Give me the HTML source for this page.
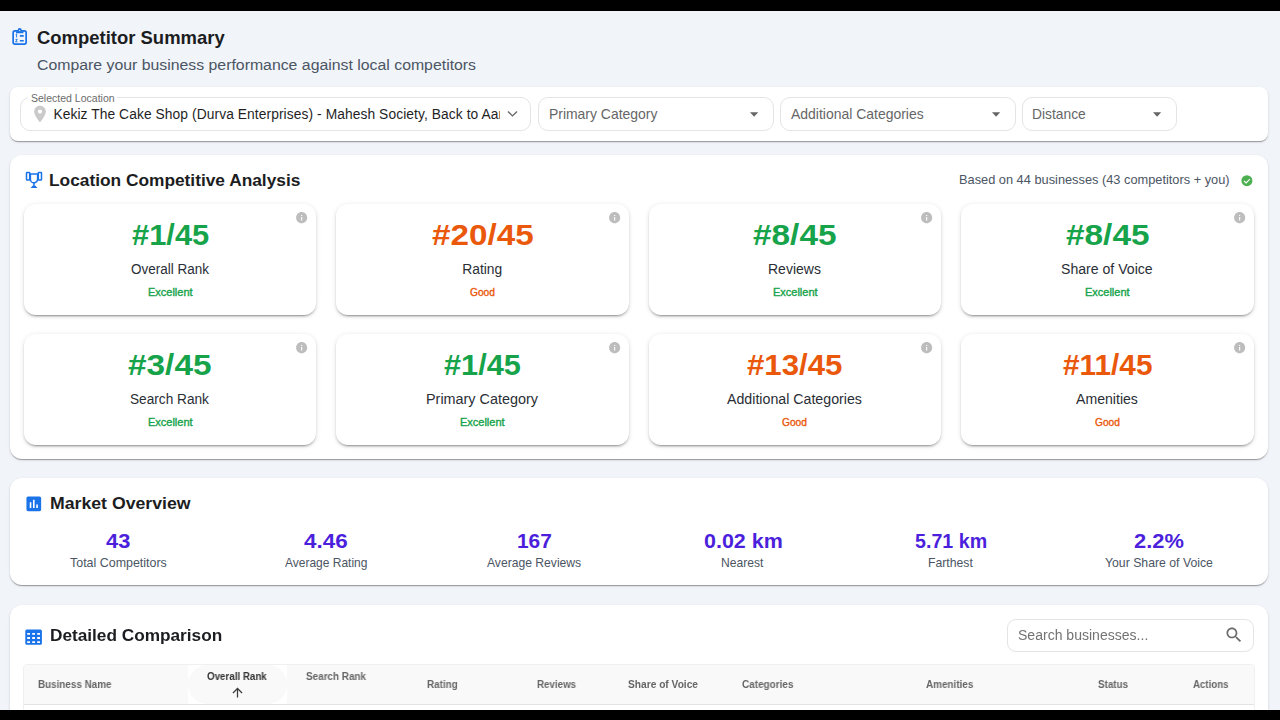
<!DOCTYPE html>
<html><head><meta charset="utf-8">
<style>
*{box-sizing:border-box;margin:0;padding:0}
html,body{width:1280px;height:720px;overflow:hidden;background:#000}
body{font-family:"Liberation Sans",sans-serif;position:relative}
.bg{position:absolute;left:0;top:11px;width:1280px;height:698.5px;background:#f1f4f9}
.a{position:absolute}
.card{position:absolute;background:#fff;border-radius:12px;
 box-shadow:0 2px 1px -1px rgba(0,0,0,.2),0 1px 1px 0 rgba(0,0,0,.14),0 1px 3px 0 rgba(0,0,0,.12)}
.kpi{position:absolute;width:292.5px;height:110.5px;background:#fff;border-radius:12px;
 box-shadow:0 3px 1px -2px rgba(0,0,0,.2),0 2px 2px 0 rgba(0,0,0,.14),0 1px 5px 0 rgba(0,0,0,.12)}
.t{position:absolute;white-space:nowrap;line-height:1}
.field{position:absolute;border:1px solid #e4e4e4;border-radius:10px;background:#fff}
.info{position:absolute;width:11px;height:11px}
.black{position:absolute;left:0;width:1280px;background:#000}
</style></head><body>
<div class="bg"></div>

<!-- header icon: clipboard list -->
<svg class="a" style="left:8px;top:24px" width="24" height="24" viewBox="0 0 24 24">
  <rect x="5.15" y="6.85" width="13" height="13.3" rx="1.8" fill="none" stroke="#1a73e8" stroke-width="1.7"/>
  <path d="M9.6 6.2a2.1 2.1 0 0 1 4.2 0v0.8H9.6z" fill="#1a73e8"/>
  <circle cx="11.7" cy="6.7" r=".65" fill="#fff"/>
  <path d="M7.6 7.2h8.2l-0.6 2h-7z" fill="#1a73e8"/>
  <rect x="11.8" y="11.1" width="4" height="1.6" rx=".5" fill="#1a73e8"/>
  <rect x="11.8" y="16" width="4" height="1.6" rx=".5" fill="#1a73e8"/>
  <path d="M7.7 10.5l.9-.6v3.6" fill="none" stroke="#1a73e8" stroke-width=".9"/>
  <path d="M7.5 15.4h1.8l-1.8 2.4h2" fill="none" stroke="#1a73e8" stroke-width=".9"/>
</svg>

<!-- filter card -->
<div class="card" style="left:10px;top:87px;width:1258px;height:54px;border-radius:8px"></div>
<div class="field" style="left:20px;top:97px;width:511px;height:34px"></div>
<div class="a" style="left:28px;top:96px;width:89px;height:4px;background:#fff"></div>
<svg class="a" style="left:30px;top:104px" width="20" height="20" viewBox="0 0 24 24"><path fill="#cacaca" d="M12 2C8.13 2 5 5.13 5 9c0 5.25 7 13 7 13s7-7.75 7-13c0-3.87-3.13-7-7-7zm0 9.5c-1.38 0-2.5-1.12-2.5-2.5s1.12-2.5 2.5-2.5 2.5 1.12 2.5 2.5-1.12 2.5-2.5 2.5z"/></svg>
<svg class="a" style="left:506px;top:109px" width="13" height="10" viewBox="0 0 13 10"><path d="M2 2.5l4.5 4.4 4.5-4.4" fill="none" stroke="#666" stroke-width="1.35"/></svg>
<div class="field" style="left:538px;top:97px;width:236px;height:34px"></div>
<div class="field" style="left:780px;top:97px;width:236px;height:34px"></div>
<div class="field" style="left:1022px;top:97px;width:155px;height:34px"></div>
<svg class="a" style="left:749.8px;top:111.8px" width="9" height="6" viewBox="0 0 9 6"><path d="M0 0.2h8.2l-4.1 4.5z" fill="#666"/></svg>
<svg class="a" style="left:991.8px;top:111.8px" width="9" height="6" viewBox="0 0 9 6"><path d="M0 0.2h8.2l-4.1 4.5z" fill="#666"/></svg>
<svg class="a" style="left:1152.8px;top:111.8px" width="9" height="6" viewBox="0 0 9 6"><path d="M0 0.2h8.2l-4.1 4.5z" fill="#666"/></svg>

<!-- analysis card -->
<div class="card" style="left:10px;top:154.5px;width:1258px;height:304px"></div>
<svg class="a" style="left:24px;top:170px" width="20" height="20" viewBox="0 0 20 20">
  <g fill="none" stroke="#1a73e8" stroke-width="1.5">
    <rect x="2.5" y="2.4" width="3.2" height="7.6" rx=".6"/>
    <rect x="14.3" y="2.4" width="3.2" height="7.6" rx=".6"/>
    <path d="M6.4 3.9h7.2v5.3a3.6 3.6 0 0 1-7.2 0z"/>
    <path d="M10 13v2.5"/>
  </g>
  <path d="M6.5 18h7l-2.6-2.8h-1.8z" fill="#1a73e8"/>
</svg>
<svg class="a" style="left:1241px;top:175px" width="12" height="12" viewBox="0 0 12 12"><circle cx="5.9" cy="5.7" r="5.5" fill="#4caf50"/><path d="M3 6l2.1 1.9 3.8-3.7" fill="none" stroke="#fff" stroke-width="1.15"/></svg>

<div class="kpi" style="left:23.5px;top:204px"></div>
<div class="kpi" style="left:336px;top:204px"></div>
<div class="kpi" style="left:648.5px;top:204px"></div>
<div class="kpi" style="left:961px;top:204px"></div>
<div class="kpi" style="left:23.5px;top:334px"></div>
<div class="kpi" style="left:336px;top:334px"></div>
<div class="kpi" style="left:648.5px;top:334px"></div>
<div class="kpi" style="left:961px;top:334px"></div>
<svg class="info" style="left:295.10px;top:211.40px;width:13.3px;height:13.3px" viewBox="0 0 24 24"><path fill="#bdbdbd" d="M12 2C6.48 2 2 6.48 2 12s4.48 10 10 10 10-4.48 10-10S17.52 2 12 2zm1 15h-2v-6h2v6zm0-8h-2V7h2v2z"/></svg>
<svg class="info" style="left:607.60px;top:211.40px;width:13.3px;height:13.3px" viewBox="0 0 24 24"><path fill="#bdbdbd" d="M12 2C6.48 2 2 6.48 2 12s4.48 10 10 10 10-4.48 10-10S17.52 2 12 2zm1 15h-2v-6h2v6zm0-8h-2V7h2v2z"/></svg>
<svg class="info" style="left:920.10px;top:211.40px;width:13.3px;height:13.3px" viewBox="0 0 24 24"><path fill="#bdbdbd" d="M12 2C6.48 2 2 6.48 2 12s4.48 10 10 10 10-4.48 10-10S17.52 2 12 2zm1 15h-2v-6h2v6zm0-8h-2V7h2v2z"/></svg>
<svg class="info" style="left:1232.60px;top:211.40px;width:13.3px;height:13.3px" viewBox="0 0 24 24"><path fill="#bdbdbd" d="M12 2C6.48 2 2 6.48 2 12s4.48 10 10 10 10-4.48 10-10S17.52 2 12 2zm1 15h-2v-6h2v6zm0-8h-2V7h2v2z"/></svg>
<svg class="info" style="left:295.10px;top:341.40px;width:13.3px;height:13.3px" viewBox="0 0 24 24"><path fill="#bdbdbd" d="M12 2C6.48 2 2 6.48 2 12s4.48 10 10 10 10-4.48 10-10S17.52 2 12 2zm1 15h-2v-6h2v6zm0-8h-2V7h2v2z"/></svg>
<svg class="info" style="left:607.60px;top:341.40px;width:13.3px;height:13.3px" viewBox="0 0 24 24"><path fill="#bdbdbd" d="M12 2C6.48 2 2 6.48 2 12s4.48 10 10 10 10-4.48 10-10S17.52 2 12 2zm1 15h-2v-6h2v6zm0-8h-2V7h2v2z"/></svg>
<svg class="info" style="left:920.10px;top:341.40px;width:13.3px;height:13.3px" viewBox="0 0 24 24"><path fill="#bdbdbd" d="M12 2C6.48 2 2 6.48 2 12s4.48 10 10 10 10-4.48 10-10S17.52 2 12 2zm1 15h-2v-6h2v6zm0-8h-2V7h2v2z"/></svg>
<svg class="info" style="left:1232.60px;top:341.40px;width:13.3px;height:13.3px" viewBox="0 0 24 24"><path fill="#bdbdbd" d="M12 2C6.48 2 2 6.48 2 12s4.48 10 10 10 10-4.48 10-10S17.52 2 12 2zm1 15h-2v-6h2v6zm0-8h-2V7h2v2z"/></svg>

<!-- market card -->
<div class="card" style="left:10px;top:478px;width:1258px;height:107px"></div>
<svg class="a" style="left:23.9px;top:493.8px" width="19.6" height="19.6" viewBox="0 0 24 24"><path fill="#1a73e8" d="M19 3H5c-1.1 0-2 .9-2 2v14c0 1.1.9 2 2 2h14c1.1 0 2-.9 2-2V5c0-1.1-.9-2-2-2zM9 17H7v-7h2v7zm4 0h-2V7h2v10zm4 0h-2v-4h2v4z"/></svg>

<!-- detailed card -->
<div class="card" style="left:10px;top:605px;width:1258px;height:200px"></div>
<svg class="a" style="left:25px;top:629px" width="18" height="17" viewBox="0 0 18 17">
  <path fill="#1a73e8" fill-rule="evenodd" d="M1.8 0.4h13.6a1.5 1.5 0 0 1 1.5 1.5v12.3a1.5 1.5 0 0 1-1.5 1.5H1.8a1.5 1.5 0 0 1-1.5-1.5V1.9a1.5 1.5 0 0 1 1.5-1.5z
  M2.2 3.9v1.9h2.8V3.9z M7.2 3.9v1.9h2.8V3.9z M12.2 3.9v1.9h2.8V3.9z
  M2.2 8.1v1.9h2.8V8.1z M7.2 8.1v1.9h2.8V8.1z M12.2 8.1v1.9h2.8V8.1z
  M2.2 12.2v1.9h2.8v-1.9z M7.2 12.2v1.9h2.8v-1.9z M12.2 12.2v1.9h2.8v-1.9z"/>
</svg>
<div class="field" style="left:1007px;top:619px;width:247px;height:33px;border-radius:9px"></div>
<svg class="a" style="left:1224px;top:625px" width="20" height="20" viewBox="0 0 24 24"><path fill="#6b6b6b" d="M15.5 14h-.79l-.28-.27C15.41 12.59 16 11.11 16 9.5 16 5.91 13.09 3 9.5 3S3 5.910 3 9.5 5.91 16 9.5 16c1.61 0 3.09-.59 4.23-1.57l.27.28v.79l5 4.99L20.49 19l-4.99-5zm-6 0C7.01 14 5 11.99 5 9.5S7.01 5 9.5 5 14 7.01 14 9.5 11.99 14 9.5 14z"/></svg>
<div class="a" style="left:23px;top:664px;width:1232px;height:80px;border:1px solid #f0f0f0;border-radius:4px"></div>
<div class="a" style="left:24px;top:664.5px;width:1230px;height:40.5px;background:#f9f9f9;border-bottom:1px solid #e3e3e3;border-radius:4px 4px 0 0"></div>
<div class="a" style="left:188px;top:664.5px;width:99px;height:39.5px;background:#fff"></div>
<div class="a" style="left:188px;top:664.5px;width:99px;height:39.5px;background:#f9f9f9;border-radius:20px"></div>
<svg class="a" style="left:229.5px;top:685px" width="15" height="15" viewBox="0 0 24 24"><path fill="#3a3a3a" d="M4 12l1.41 1.41L11 7.83V20h2V7.83l5.58 5.59L20 12l-8-8-8 8z"/></svg>

<div class="t" style="left:37.00px;top:29.03px;font-size:18.1px;font-weight:bold;color:#1c1d21;transform:scaleX(1.0200);transform-origin:0 0">Competitor Summary</div>
<div class="t" style="left:36.80px;top:57.02px;font-size:15.3px;font-weight:normal;color:#4b5563;transform:scaleX(1.0348);transform-origin:0 0">Compare your business performance against local competitors</div>
<div class="t" style="left:30.80px;top:94.02px;font-size:10px;font-weight:normal;color:#6b6b6b;transform:scaleX(1.0514);transform-origin:0 0">Selected Location</div>
<div class="t" style="left:53.40px;top:108.02px;font-size:13.8px;font-weight:normal;color:#1f1f1f;letter-spacing:0.080px;width:447.00px;overflow:hidden">Kekiz The Cake Shop (Durva Enterprises) - Mahesh Society, Back to Aarey</div>
<div class="t" style="left:548.51px;top:107.03px;font-size:14.1px;font-weight:normal;color:#666;transform:scaleX(0.9881);transform-origin:0 0">Primary Category</div>
<div class="t" style="left:791.20px;top:107.03px;font-size:14.1px;font-weight:normal;color:#666;transform:scaleX(0.9901);transform-origin:0 0">Additional Categories</div>
<div class="t" style="left:1032.22px;top:107.03px;font-size:14.1px;font-weight:normal;color:#666;transform:scaleX(0.9797);transform-origin:0 0">Distance</div>
<div class="t" style="left:49.42px;top:173.03px;font-size:16px;font-weight:bold;color:#1c1d21;transform:scaleX(1.0817);transform-origin:0 0">Location Competitive Analysis</div>
<div class="t" style="left:959.45px;top:174.03px;font-size:12.2px;font-weight:normal;color:#4b5563;transform:scaleX(1.0498);transform-origin:0 0">Based on 44 businesses (43 competitors + you)</div>
<div class="t" style="left:131.53px;top:220.03px;font-size:29.6px;font-weight:bold;color:#16a34a;transform:scaleX(1.0428);transform-origin:0 0">#1/45</div>
<div class="t" style="left:130.90px;top:263.02px;font-size:13.8px;font-weight:normal;color:#2a2e35;transform:scaleX(0.9769);transform-origin:0 0">Overall Rank</div>
<div class="t" style="left:147.53px;top:288.02px;font-size:10.2px;font-weight:normal;color:#16a34a;transform:scaleX(1.0781);transform-origin:0 0;-webkit-text-stroke:0.35px #16a34a">Excellent</div>
<div class="t" style="left:431.77px;top:220.03px;font-size:29.6px;font-weight:bold;color:#ea580c;transform:scaleX(1.1243);transform-origin:0 0">#20/45</div>
<div class="t" style="left:462.27px;top:263.02px;font-size:13.8px;font-weight:normal;color:#2a2e35">Rating</div>
<div class="t" style="left:469.80px;top:288.02px;font-size:10.2px;font-weight:normal;color:#ea580c;transform:scaleX(0.9978);transform-origin:0 0;-webkit-text-stroke:0.35px #ea580c">Good</div>
<div class="t" style="left:753.40px;top:220.03px;font-size:29.6px;font-weight:bold;color:#16a34a;transform:scaleX(1.1277);transform-origin:0 0">#8/45</div>
<div class="t" style="left:767.89px;top:263.02px;font-size:13.8px;font-weight:normal;color:#2a2e35;transform:scaleX(1.0149);transform-origin:0 0">Reviews</div>
<div class="t" style="left:772.52px;top:288.02px;font-size:10.2px;font-weight:normal;color:#16a34a;transform:scaleX(1.0781);transform-origin:0 0;-webkit-text-stroke:0.35px #16a34a">Excellent</div>
<div class="t" style="left:1065.90px;top:220.03px;font-size:29.6px;font-weight:bold;color:#16a34a;transform:scaleX(1.1277);transform-origin:0 0">#8/45</div>
<div class="t" style="left:1061.40px;top:263.02px;font-size:13.8px;font-weight:normal;color:#2a2e35;transform:scaleX(1.0215);transform-origin:0 0">Share of Voice</div>
<div class="t" style="left:1085.03px;top:288.02px;font-size:10.2px;font-weight:normal;color:#16a34a;transform:scaleX(1.0781);transform-origin:0 0;-webkit-text-stroke:0.35px #16a34a">Excellent</div>
<div class="t" style="left:128.40px;top:350.03px;font-size:29.6px;font-weight:bold;color:#16a34a;transform:scaleX(1.1277);transform-origin:0 0">#3/45</div>
<div class="t" style="left:130.40px;top:393.02px;font-size:13.8px;font-weight:normal;color:#2a2e35;transform:scaleX(0.9893);transform-origin:0 0">Search Rank</div>
<div class="t" style="left:147.53px;top:418.02px;font-size:10.2px;font-weight:normal;color:#16a34a;transform:scaleX(1.0781);transform-origin:0 0;-webkit-text-stroke:0.35px #16a34a">Excellent</div>
<div class="t" style="left:444.20px;top:350.03px;font-size:29.6px;font-weight:bold;color:#16a34a;transform:scaleX(1.0381);transform-origin:0 0">#1/45</div>
<div class="t" style="left:425.86px;top:393.02px;font-size:13.8px;font-weight:normal;color:#2a2e35;transform:scaleX(1.0429);transform-origin:0 0">Primary Category</div>
<div class="t" style="left:460.02px;top:418.02px;font-size:10.2px;font-weight:normal;color:#16a34a;transform:scaleX(1.0781);transform-origin:0 0;-webkit-text-stroke:0.35px #16a34a">Excellent</div>
<div class="t" style="left:747.40px;top:350.03px;font-size:29.6px;font-weight:bold;color:#ea580c;transform:scaleX(1.0549);transform-origin:0 0">#13/45</div>
<div class="t" style="left:727.40px;top:393.02px;font-size:13.8px;font-weight:normal;color:#2a2e35;transform:scaleX(1.0285);transform-origin:0 0">Additional Categories</div>
<div class="t" style="left:782.30px;top:418.02px;font-size:10.2px;font-weight:normal;color:#ea580c;transform:scaleX(0.9978);transform-origin:0 0;-webkit-text-stroke:0.35px #ea580c">Good</div>
<div class="t" style="left:1062.90px;top:350.03px;font-size:29.6px;font-weight:bold;color:#ea580c;transform:scaleX(1.0065);transform-origin:0 0">#11/45</div>
<div class="t" style="left:1076.40px;top:393.02px;font-size:13.8px;font-weight:normal;color:#2a2e35;transform:scaleX(1.0218);transform-origin:0 0">Amenities</div>
<div class="t" style="left:1094.80px;top:418.02px;font-size:10.2px;font-weight:normal;color:#ea580c;transform:scaleX(0.9978);transform-origin:0 0;-webkit-text-stroke:0.35px #ea580c">Good</div>
<div class="t" style="left:49.60px;top:496.02px;font-size:16px;font-weight:bold;color:#1c1d21;transform:scaleX(1.1047);transform-origin:0 0">Market Overview</div>
<div class="t" style="left:105.70px;top:532.03px;font-size:19.3px;font-weight:bold;color:#4b1fdc;transform:scaleX(1.1324);transform-origin:0 0">43</div>
<div class="t" style="left:69.70px;top:557.03px;font-size:12.4px;font-weight:normal;color:#4b5563;transform:scaleX(1.0040);transform-origin:0 0">Total Competitors</div>
<div class="t" style="left:304.20px;top:532.03px;font-size:19.3px;font-weight:bold;color:#4b1fdc;transform:scaleX(1.1639);transform-origin:0 0">4.46</div>
<div class="t" style="left:284.95px;top:557.03px;font-size:12.4px;font-weight:normal;color:#4b5563;transform:scaleX(0.9672);transform-origin:0 0">Average Rating</div>
<div class="t" style="left:516.82px;top:532.03px;font-size:19.3px;font-weight:bold;color:#4b1fdc;transform:scaleX(1.0839);transform-origin:0 0">167</div>
<div class="t" style="left:487.40px;top:557.03px;font-size:12.4px;font-weight:normal;color:#4b5563;transform:scaleX(0.9792);transform-origin:0 0">Average Reviews</div>
<div class="t" style="left:703.85px;top:532.03px;font-size:19.3px;font-weight:bold;color:#4b1fdc;transform:scaleX(1.1134);transform-origin:0 0">0.02 km</div>
<div class="t" style="left:720.62px;top:557.03px;font-size:12.4px;font-weight:normal;color:#4b5563;transform:scaleX(0.9780);transform-origin:0 0">Nearest</div>
<div class="t" style="left:915.30px;top:532.03px;font-size:19.3px;font-weight:bold;color:#4b1fdc;transform:scaleX(1.0200);transform-origin:0 0">5.71 km</div>
<div class="t" style="left:927.61px;top:557.03px;font-size:12.4px;font-weight:normal;color:#4b5563;transform:scaleX(0.9865);transform-origin:0 0">Farthest</div>
<div class="t" style="left:1134.15px;top:532.03px;font-size:19.3px;font-weight:bold;color:#4b1fdc;transform:scaleX(1.1346);transform-origin:0 0">2.2%</div>
<div class="t" style="left:1105.00px;top:557.03px;font-size:12.4px;font-weight:normal;color:#4b5563;transform:scaleX(0.9892);transform-origin:0 0">Your Share of Voice</div>
<div class="t" style="left:49.92px;top:628.03px;font-size:16px;font-weight:bold;color:#1c1d21;transform:scaleX(1.0758);transform-origin:0 0;will-change:transform">Detailed Comparison</div>
<div class="t" style="left:1017.50px;top:628.03px;font-size:14px;font-weight:normal;color:#737373;transform:scaleX(1.0026);transform-origin:0 0;will-change:transform">Search businesses...</div>
<div class="t" style="left:37.60px;top:680.02px;font-size:10.2px;font-weight:bold;color:#666;transform:scaleX(0.9671);transform-origin:0 0;will-change:transform">Business Name</div>
<div class="t" style="left:207.20px;top:672.02px;font-size:10.2px;font-weight:bold;color:#333;transform:scaleX(0.9581);transform-origin:0 0;will-change:transform">Overall Rank</div>
<div class="t" style="left:305.70px;top:672.02px;font-size:10.2px;font-weight:bold;color:#666;transform:scaleX(0.9717);transform-origin:0 0;will-change:transform">Search Rank</div>
<div class="t" style="left:427.00px;top:680.02px;font-size:10.2px;font-weight:bold;color:#666;transform:scaleX(0.9692);transform-origin:0 0;will-change:transform">Rating</div>
<div class="t" style="left:536.60px;top:680.02px;font-size:10.2px;font-weight:bold;color:#666;transform:scaleX(0.9584);transform-origin:0 0;will-change:transform">Reviews</div>
<div class="t" style="left:627.70px;top:680.02px;font-size:10.2px;font-weight:bold;color:#666;transform:scaleX(0.9979);transform-origin:0 0;will-change:transform">Share of Voice</div>
<div class="t" style="left:742.00px;top:680.02px;font-size:10.2px;font-weight:bold;color:#666;transform:scaleX(0.9776);transform-origin:0 0;will-change:transform">Categories</div>
<div class="t" style="left:925.50px;top:680.02px;font-size:10.2px;font-weight:bold;color:#666;transform:scaleX(0.9730);transform-origin:0 0;will-change:transform">Amenities</div>
<div class="t" style="left:1097.60px;top:680.02px;font-size:10.2px;font-weight:bold;color:#666;transform:scaleX(0.9660);transform-origin:0 0;will-change:transform">Status</div>
<div class="t" style="left:1192.60px;top:680.02px;font-size:10.2px;font-weight:bold;color:#666;transform:scaleX(0.9498);transform-origin:0 0;will-change:transform">Actions</div>

<div class="black" style="top:0;height:11px"></div>
<div class="black" style="top:709.5px;height:11px"></div>
</body></html>
